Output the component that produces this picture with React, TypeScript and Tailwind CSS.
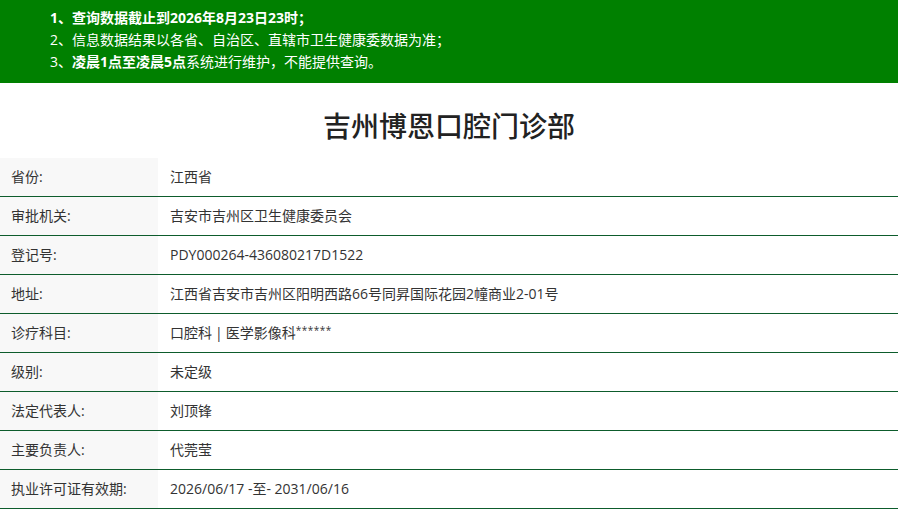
import type { ReactNode } from "react";

const rows: { label: string; value: ReactNode }[] = [
  { label: "省份:", value: "江西省" },
  { label: "审批机关:", value: "吉安市吉州区卫生健康委员会" },
  { label: "登记号:", value: "PDY000264-436080217D1522" },
  { label: "地址:", value: "江西省吉安市吉州区阳明西路66号同昇国际花园2幢商业2-01号" },
  {
    label: "诊疗科目:",
    value: (
      <>
        口腔科<span className="mx-[3px]">|</span>医学影像科
        <span className="text-[10px] tracking-[0.5px] self-start mt-[1px]">******</span>
      </>
    ),
  },
  { label: "级别:", value: "未定级" },
  { label: "法定代表人:", value: "刘顶锋" },
  { label: "主要负责人:", value: "代莞莹" },
  { label: "执业许可证有效期:", value: "2026/06/17 -至- 2031/06/16" },
];

const App = () => {
  return (
    <div
      className="min-h-screen bg-white text-[#333]"
      style={{ fontFamily: '"Open Sans", "Noto Sans CJK SC", sans-serif' }}
    >
      <div className="bg-[#008000] h-[83px] pl-[50px] pt-[7px] text-white text-[14px] leading-[22px]">
        <p className="font-bold">1、查询数据截止到2026年8月23日23时；</p>
        <p>2、信息数据结果以各省、自治区、直辖市卫生健康委数据为准；</p>
        <p>
          3、<span className="font-bold">凌晨1点至凌晨5点</span>系统进行维护，不能提供查询。
        </p>
      </div>

      <h1 className="h-[75px] flex items-center justify-center text-[28px] font-medium text-[#222] pt-[10px]">
        吉州博恩口腔门诊部
      </h1>

      <div>
        {rows.map((row) => (
          <div key={row.label} className="flex h-[39px] border-b border-[#0d5c2c] text-[14px]">
            <div className="w-[158px] shrink-0 bg-[#f8f8f8] flex items-center pl-[11px] pb-[2px]">
              {row.label}
            </div>
            <div className="flex items-center pl-[12px] pb-[2px]">
              <span className="flex items-center">{row.value}</span>
            </div>
          </div>
        ))}
      </div>
    </div>
  );
};

export default App;
